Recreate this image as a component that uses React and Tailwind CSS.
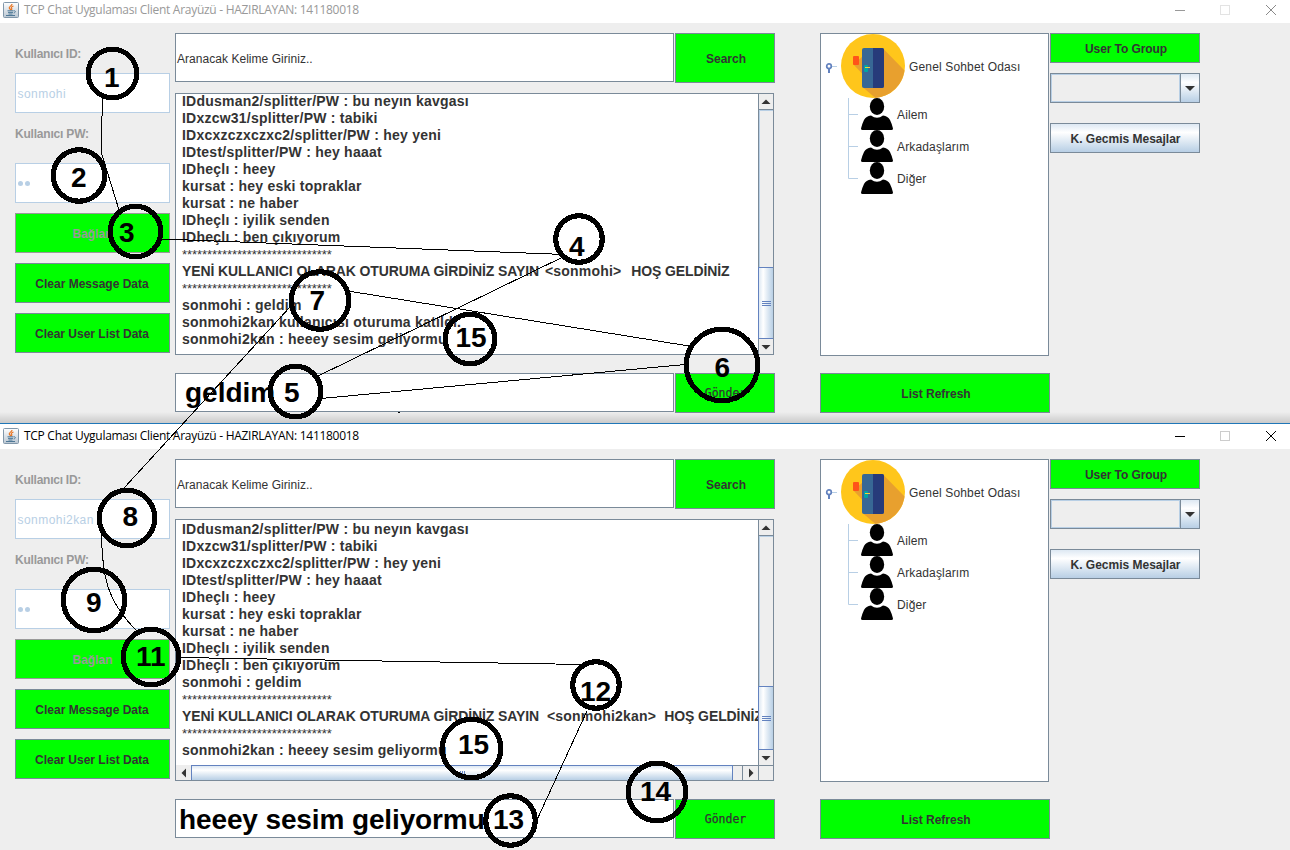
const BTN = "flex items-center justify-center border border-[#7a8a99] bg-[#00ff00] pt-[2px] text-[12px] font-bold leading-none text-[#333333]";

function JavaIcon() {
  return (
    <svg width="16" height="16" viewBox="0 0 16 16" className="shrink-0">
      <defs>
        <linearGradient id="cup" x1="0" y1="0" x2="0" y2="1">
          <stop offset="0" stopColor="#ffffff" />
          <stop offset="1" stopColor="#b9c6d2" />
        </linearGradient>
      </defs>
      <rect x="0.5" y="0.5" width="15" height="15" rx="1" fill="url(#cup)" stroke="#8197aa" />
      <path d="M9 2C9.300 3.800 5.400 4.600 6.300 6.200L7.800 8M10.500 4C7.800 5 8 6 8.800 6.600C9.100 7.200 8.700 7.600 8.200 8" fill="none" stroke="#e8731f" strokeWidth="1.2" />
      <path d="M4.500 8.800H10.500M5 10.400H10M5.500 12H9.500M3 13.500H12M10.800 8.800C13 8.500 12.800 10.600 10.700 11" fill="none" stroke="#4f7896" strokeWidth="1" />
    </svg>
  );
}

function TitleBar({ active }) {
  return (
    <div className={active
      ? "flex h-[26px] shrink-0 items-center border-t border-[#1f77b8] bg-white pb-px pl-[3px] text-black"
      : "flex h-[23px] shrink-0 items-center bg-white pb-[3px] pl-[3px] text-[#999999]"}>
      <JavaIcon />
      <span className="ml-[5px] whitespace-nowrap font-['Open_Sans','Noto_Sans',sans-serif] text-[12px] leading-[16px] tracking-[-0.285px]">
        TCP Chat Uygulaması Client Arayüzü - HAZIRLAYAN: 141180018
      </span>
      <svg width="110" height="14" viewBox="0 0 110 14" className="ml-auto mr-[10px] shrink-0" fill="none">
        <path d="M5 7.500H15" stroke={active ? "#000000" : "#999999"} />
        <rect x="50.500" y="2.500" width="9" height="9" stroke={active ? "#cccccc" : "#e3e3e3"} />
        <path d="M96 2L106 12M106 2L96 12" stroke={active ? "#000000" : "#8a8a8a"} />
      </svg>
    </div>
  );
}

function Credentials({ user }) {
  return (
    <div className="flex w-[155px] flex-col">
      <div className="flex h-[40px] items-center pt-[2px] text-[12px] font-bold tracking-[-0.25px] text-[#999999]">Kullanıcı ID:</div>
      <div className="flex h-[40px] items-center border border-[#b8cfe5] bg-white pl-[1.5px] pt-[2px] text-[12px] tracking-[0.45px] text-[#b8cfe5]">{user}</div>
      <div className="flex h-[40px] items-center pt-[2px] text-[12px] font-bold tracking-[-0.2px] text-[#999999]">Kullanıcı PW:</div>
      <div className="mt-[10px] flex h-[40px] items-center gap-[2px] border border-[#b8cfe5] bg-white pl-[2px]">
        <span className="size-[5px] rounded-full bg-[#b8cfe5]" />
        <span className="size-[5px] rounded-full bg-[#b8cfe5]" />
      </div>
      <div className="mt-[10px] flex h-[40px] items-center justify-center border border-[#999999] bg-[#00ff00] pt-[2px] text-[12px] font-bold text-[#999999]">Bağlan</div>
      <div className={`${BTN} mt-[10px] h-[40px] pr-px`}>Clear Message Data</div>
      <div className={`${BTN} mt-[10px] h-[40px] pr-px`}>Clear User List Data</div>
    </div>
  );
}

function ArrowBox({ d, className }) {
  return (
    <div className={`flex shrink-0 items-center justify-center bg-[#eeeeee] ${className}`}>
      <svg width="10" height="10" viewBox="0 0 10 10"><path d={d} fill="#333333" /></svg>
    </div>
  );
}

function VScroll({ spaceClass, thumbClass }) {
  return (
    <div className="flex w-[15px] shrink-0 flex-col border-l border-[#7a8a99] bg-[#eeeeee]">
      <ArrowBox d="M0.500 7L5 2.500L9.500 7Z" className="h-4 border-b border-[#7a8a99]" />
      <div className={`shrink-0 border-l border-t border-[#b8cfe5] ${spaceClass}`} />
      <div className={`-ml-px flex shrink-0 flex-col items-center justify-center gap-px border-y border-l border-[#6382bf] bg-linear-to-r from-[#dde8f3] via-white via-30% to-[#b8cfe5] ${thumbClass}`}>
        <i className="h-px w-[9px] bg-[#6382bf]" />
        <i className="h-px w-[9px] bg-[#6382bf]" />
        <i className="h-px w-[9px] bg-[#6382bf]" />
      </div>
      <ArrowBox d="M0.500 3L5 7.500L9.500 3Z" className="grow" />
    </div>
  );
}

function HScroll() {
  return (
    <div className="flex h-[15px] shrink-0">
      <ArrowBox d="M7 0.500L2.500 5L7 9.500Z" className="w-[15px]" />
      <div className="flex w-[542px] shrink-0 items-center justify-center gap-px border-x border-t border-[#6382bf] bg-linear-to-b from-[#dde8f3] via-white via-30% to-[#b8cfe5]">
        <i className="h-[5px] w-px bg-[#6382bf]" />
        <i className="h-[5px] w-px bg-[#6382bf]" />
        <i className="h-[5px] w-px bg-[#6382bf]" />
      </div>
      <div className="w-[9px] border-t border-[#7a8a99] bg-[#eeeeee]" />
      <ArrowBox d="M3 0.500L7.500 5L3 9.500Z" className="w-[17px] border-x border-t border-[#7a8a99]" />
      <div className="grow border-t border-[#7a8a99] bg-[#eeeeee]" />
    </div>
  );
}

const STARS = "******************************";

/* Join notices are arrays: lead-in, user tag, closing words */
function Line({ line }) {
  if (Array.isArray(line)) {
    return (
      <div className="h-[17px] whitespace-pre text-[14px] font-bold leading-[17px] tracking-[-0.1px] text-[#333333]">
        {line[0]}<span className={line[3]}>{line[1]}</span>{line[2]}
      </div>
    );
  }
  return (
    <div className={line === STARS
      ? "h-[17px] whitespace-pre text-[13px] leading-[17px] tracking-[-0.07px] text-[#333333]"
      : "h-[17px] whitespace-pre text-[14px] font-bold leading-[17px] tracking-[0.23px] text-[#333333]"}>
      {line}
    </div>
  );
}

function Messages({ lines, className }) {
  return (
    <div className={`min-h-0 min-w-0 grow overflow-hidden pl-[6px] ${className}`}>
      {lines.map((line, i) => <Line key={i} line={line} />)}
    </div>
  );
}

function ChatColumn({ lines, active, draft }) {
  return (
    <div className="ml-[5px] flex w-[600px] flex-col">
      <div className="flex h-[50px] gap-px">
        <div className="flex h-[49px] w-[499px] items-center border border-[#7a8a99] bg-white pl-px pt-[2px] text-[12px] tracking-[0.04px] text-[#333333]">Aranacak Kelime Giriniz..</div>
        <div className={`${BTN} w-[100px] pl-[2px]`}>Search</div>
      </div>
      <div className="mt-[10px] flex h-[262px] w-[599px] flex-col border border-[#7a8a99] bg-white">
        <div className="flex min-h-0 grow">
          <Messages lines={lines} className={active ? "pt-px" : "-mt-px"} />
          {active
            ? <VScroll spaceClass="h-[150px]" thumbClass="h-[64px]" />
            : <VScroll spaceClass="h-[157px]" thumbClass="h-[72px]" />}
        </div>
        {active && <HScroll />}
      </div>
      <div className="mt-[18px] flex h-[40px] gap-px">
        <div className={`flex h-[39px] w-[499px] items-center whitespace-nowrap border border-[#7a8a99] bg-white text-[28px] font-bold leading-none text-black ${active ? "pl-[3px] pt-[2px] tracking-[-0.12px]" : "pl-[9px]"}`}>{draft}</div>
        <div className="flex w-[100px] items-center justify-center border border-[#7a8a99] bg-[#00ff00] pl-px pt-[2px] font-['DejaVu_Sans_Mono',monospace] text-[11.5px] leading-none text-[#333333] [-webkit-text-stroke:0.25px_#333333]">Gönder</div>
      </div>
    </div>
  );
}

function RoomIcon() {
  return (
    <svg width="64" height="64" viewBox="0 0 64 64" className="shrink-0">
      <circle cx="32" cy="32" r="32" fill="#ffc61b" />
      <path d="M12.500 30.500L22 22L42 14.500L63.500 36.500A32 32 0 0 1 34.500 63.900L21.500 53V40Z" fill="#e8a02e" />
      <rect x="21" y="14" width="22" height="40" rx="2" fill="#386895" />
      <path d="M32 14H41a2 2 0 0 1 2 2V52a2 2 0 0 1-2 2H32Z" fill="#273b7a" />
      <rect x="12" y="22" width="6" height="9" rx="1" fill="#ff5419" />
      <rect x="23" y="31" width="4" height="7" rx="1" fill="#00a5a5" />
      <path d="M24 33.500H29" stroke="#f4d03a" />
    </svg>
  );
}

function PersonIcon() {
  return (
    <svg width="32" height="32" viewBox="0 0 32 32" className="shrink-0">
      <ellipse cx="16" cy="8.500" rx="7.200" ry="8.500" fill="#000" />
      <path d="M10 17.500Q16 22 22 17.500Q27 18 29 22Q31 26 32 30.500Q32 32 30.500 32H1.500Q0 32 0 30.500Q1 26 3 22Q5 18 10 17.500Z" fill="#000" />
    </svg>
  );
}

function TreeColumn() {
  return (
    <div className="ml-[45px] flex w-[230px] flex-col">
      <div className="h-[323px] w-[229px] border border-[#7a8a99] bg-white text-[12px] tracking-[0.15px] text-[#333333]">
        <div className="flex h-[64px] items-center">
          <svg width="20" height="20" viewBox="0 0 20 20" className="shrink-0" fill="none">
            <path d="M10 10.500H16" stroke="#b8cfe5" />
            <circle cx="8" cy="10.200" r="2.300" stroke="#6382bf" strokeWidth="1.700" />
            <path d="M8 12.500V17" stroke="#6382bf" strokeWidth="2" />
          </svg>
          <RoomIcon />
          <span className="ml-1 pt-[2px]">Genel Sohbet Odası</span>
        </div>
        <div className="flex">
          <svg width="40" height="96" viewBox="0 0 40 96" className="shrink-0" fill="none">
            <path d="M27.500 0V80.500H37M27.500 16.500H37M27.500 48.500H37" stroke="#b8cfe5" />
          </svg>
          <div>
            {["Ailem", "Arkadaşlarım", "Diğer"].map((name) => (
              <div key={name} className="flex h-8 items-center gap-1"><PersonIcon /><span className="pt-[2px]">{name}</span></div>
            ))}
          </div>
        </div>
      </div>
      <div className={`${BTN} mt-[17px] h-[40px] pl-[2px]`}>List Refresh</div>
    </div>
  );
}

function GroupColumn() {
  return (
    <div className="flex w-[150px] flex-col">
      <div className={`${BTN} h-[30px] pl-[2px] tracking-[-0.08px]`}>User To Group</div>
      <div className="mt-[10px] flex h-[30px] border border-[#7a8a99]">
        <div className="grow border border-[#b8cfe5] bg-[#eeeeee]" />
        <div className="flex w-[19px] items-center justify-center border-l border-[#7a8a99] bg-linear-to-b from-[#dde8f3] via-white via-30% to-[#b8cfe5]">
          <svg width="10" height="5" viewBox="0 0 10 5"><path d="M0 0H10L5 5Z" fill="#333333" /></svg>
        </div>
      </div>
      <div className="mt-5 flex h-[30px] items-center justify-center border border-[#7a8a99] bg-linear-to-b from-[#dde8f3] via-white via-30% to-[#b8cfe5] pl-px pt-[2px] text-[12px] font-bold text-[#333333]">K. Gecmis Mesajlar</div>
    </div>
  );
}

function ChatWindow({ active, user, lines, draft }) {
  return (
    <section className={active ? "flex h-[427px] flex-col" : "flex h-[423px] flex-col"}>
      <TitleBar active={active} />
      <div className="flex grow bg-[#eeeeee] pl-[15px] pt-[10px]">
        <Credentials user={user} />
        <ChatColumn lines={lines} active={active} draft={draft} />
        <TreeColumn />
        <GroupColumn />
      </div>
      {!active && <div className="-mt-[11px] h-[11px] shrink-0 bg-linear-to-b from-transparent to-black/15" />}
    </section>
  );
}

const HISTORY = [
  "IDdusman2/splitter/PW : bu neyın kavgası",
  "IDxzcw31/splitter/PW : tabiki",
  "IDxcxzczxczxc2/splitter/PW : hey yeni",
  "IDtest/splitter/PW : hey haaat",
  "IDheçlı : heey",
  "kursat : hey eski topraklar",
  "kursat : ne haber",
  "IDheçlı : iyilik senden",
  "IDheçlı : ben çıkıyorum",
];

const FIRST = [
  ...HISTORY,
  STARS,
  ["YENİ KULLANICI OLARAK OTURUMA GİRDİNİZ SAYIN ", " <sonmohi>   ", "HOŞ GELDİNİZ", "-ml-[2px] mr-[-2.5px] tracking-[0.2px]"],
  STARS,
  "sonmohi : geldim",
  "sonmohi2kan kullanıcısı oturuma katıldı.",
  "sonmohi2kan : heeey sesim geliyormu",
];

const SECOND = [
  ...HISTORY,
  "sonmohi : geldim",
  STARS,
  ["YENİ KULLANICI OLARAK OTURUMA GİRDİNİZ SAYIN ", " <sonmohi2kan>  ", "HOŞ GELDİNİZ", "tracking-[0.2px]"],
  STARS,
  "sonmohi2kan : heeey sesim geliyormu",
];

/* label, circle centre, radius, label start x, label baseline */
const MARKS = [
  ["1", 112.5, 73.5, 24.5, 104, 87],
  ["2", 79, 175.5, 26, 71, 187],
  ["3", 135.500, 231.5, 25.5, 119, 242],
  ["4", 579, 239, 23.5, 569, 256],
  ["5", 295.5, 391.5, 25.5, 284, 402],
  ["6", 722, 365, 36, 714.5, 377],
  ["7", 320, 300.5, 29, 309.5, 310],
  ["15", 470, 339, 25, 455.5, 347],
  ["8", 127, 518, 28, 122.5, 526],
  ["9", 94, 600, 31, 86, 612],
  ["11", 151, 657, 28, 136, 666],
  ["12", 596, 685, 23.5, 580, 701],
  ["13", 510.5, 820.5, 25, 493, 829],
  ["14", 657, 792, 29, 640, 801],
  ["15", 471.5, 748.5, 29.5, 458, 754],
];

function Annotations() {
  return (
    <svg width="1290" height="850" viewBox="0 0 1290 850" className="pointer-events-none absolute left-0 top-0">
      <g fill="none" stroke="#000000" strokeWidth="1" shapeRendering="crispEdges">
        <path d="M102.500 97V115L101.500 117V153L119 210" />
        <path d="M162 239L565 254.500M565 256L316 377" />
        <path d="M348 291L689 346M321 398.500L685 364.500" />
        <path d="M290 307L124 488" />
        <path d="M101.500 532C102 575 106 601 138 632" />
        <path d="M180 657.500L584 664.500M587 711L536 822" />
        <path d="M398 412.500H400" />
      </g>
      {MARKS.map(([label, cx, cy, r, x, y], i) => (
        <g key={i}>
          <circle cx={cx} cy={cy} r={r - 0.25} fill="none" stroke="#000000" strokeWidth="5.2" shapeRendering="crispEdges" />
          <text x={x} y={y} fontSize="28" fontWeight="700" fill="#000000">{label}</text>
        </g>
      ))}
    </svg>
  );
}

export default function App() {
  return (
    <main className="relative h-[850px] w-[1290px] overflow-hidden bg-[#eeeeee] font-['Liberation_Sans',Arial,sans-serif]">
      <ChatWindow user="sonmohi" lines={FIRST} draft="geldim" />
      <ChatWindow active user="sonmohi2kan" lines={SECOND} draft="heeey sesim geliyormu" />
      <Annotations />
    </main>
  );
}
